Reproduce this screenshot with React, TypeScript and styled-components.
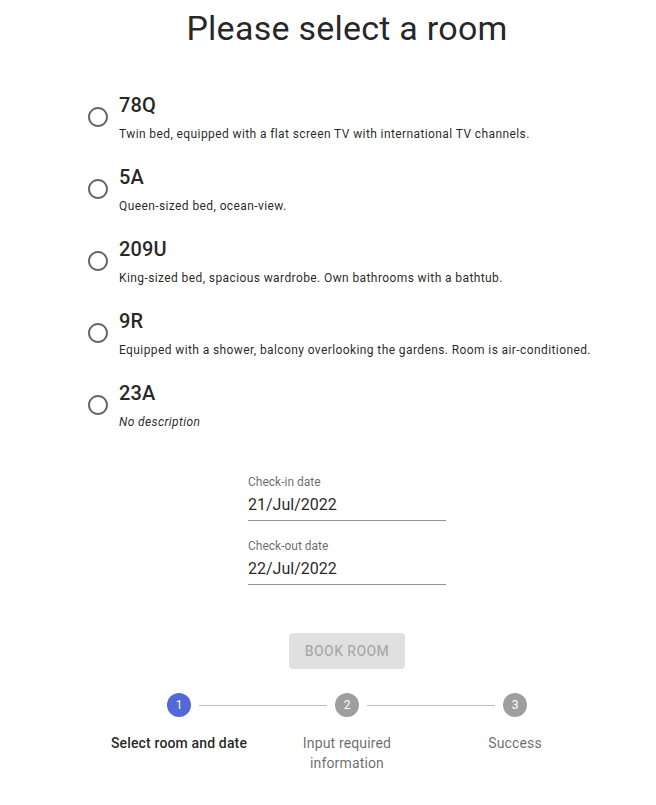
import * as React from "react";
import styled, { createGlobalStyle } from "styled-components";

const GlobalStyle = createGlobalStyle`
  body {
    margin: 0;
    font-family: Roboto, "Liberation Sans", sans-serif;
    color: rgba(0, 0, 0, 0.87);
    background: #fff;
  }
`;

const rooms = [
  { name: "78Q", description: "Twin bed, equipped with a flat screen TV with international TV channels." },
  { name: "5A", description: "Queen-sized bed, ocean-view." },
  { name: "209U", description: "King-sized bed, spacious wardrobe. Own bathrooms with a bathtub." },
  { name: "9R", description: "Equipped with a shower, balcony overlooking the gardens. Room is air-conditioned." },
  { name: "23A", description: "" },
];

const steps = ["Select room and date", "Input required information", "Success"];

export default function App() {
  return (
    <>
      <GlobalStyle />
      <Page>
        <Title>Please select a room</Title>
        <RoomList>
          {rooms.map((room) => (
            <RoomRow key={room.name}>
              <RadioBox>
                <svg width="24" height="24" viewBox="0 0 24 24" fill="rgba(0,0,0,0.6)">
                  <path d="M12 2C6.48 2 2 6.48 2 12s4.48 10 10 10 10-4.48 10-10S17.52 2 12 2zm0 18c-4.42 0-8-3.58-8-8s3.58-8 8-8 8 3.58 8 8-3.58 8-8 8z" />
                </svg>
              </RadioBox>
              <RoomText>
                <RoomName>{room.name}</RoomName>
                <RoomDesc empty={!room.description}>
                  {room.description || "No description"}
                </RoomDesc>
              </RoomText>
            </RoomRow>
          ))}
        </RoomList>

        <Fields>
          <Field>
            <FieldLabel>Check-in date</FieldLabel>
            <FieldValue>21/Jul/2022</FieldValue>
          </Field>
          <Field>
            <FieldLabel>Check-out date</FieldLabel>
            <FieldValue>22/Jul/2022</FieldValue>
          </Field>
        </Fields>

        <BookButton disabled>Book room</BookButton>

        <Stepper>
          {steps.map((label, i) => (
            <Step key={label}>
              {i > 0 && <Connector />}
              <StepIcon active={i === 0}>{i + 1}</StepIcon>
              <StepLabel active={i === 0}>{label}</StepLabel>
            </Step>
          ))}
        </Stepper>
      </Page>
    </>
  );
}

const Page = styled.div`
  box-sizing: border-box;
  width: 100%;
  padding-left: 38px;
  display: flex;
  flex-direction: column;
  align-items: center;
`;

const Title = styled.h1`
  margin: 7px 0 0;
  font-size: 34px;
  font-weight: 400;
  line-height: 42px;
  letter-spacing: 0.25px;
  color: rgba(0, 0, 0, 0.87);
`;

const RoomList = styled.div`
  align-self: stretch;
  box-sizing: border-box;
  padding-left: 39px;
  margin-top: 40px;
  display: flex;
  flex-direction: column;
  gap: 16px;
`;

const RoomRow = styled.label`
  display: flex;
  align-items: center;
  height: 56px;
`;

const RadioBox = styled.span`
  width: 42px;
  height: 42px;
  box-sizing: border-box;
  padding: 9px;
  display: flex;
  svg {
    display: block;
  }
`;

const RoomText = styled.div`
  display: flex;
  flex-direction: column;
`;

const RoomName = styled.div`
  font-size: 20px;
  font-weight: 500;
  line-height: 32px;
  letter-spacing: 0.15px;
`;

const RoomDesc = styled.div<{ empty: boolean }>`
  font-size: 12px;
  line-height: 24px;
  padding-top: 1px;
  letter-spacing: 0.4px;
  font-style: ${(p) => (p.empty ? "italic" : "normal")};
`;

const Fields = styled.div`
  margin-top: 40px;
  display: flex;
  flex-direction: column;
  gap: 16px;
`;

const Field = styled.div`
  width: 198px;
  height: 48px;
  box-sizing: border-box;
  border-bottom: 1px solid rgba(0, 0, 0, 0.42);
`;

const FieldLabel = styled.div`
  padding-top: 1px;
  font-size: 12px;
  line-height: 16px;
  color: rgba(0, 0, 0, 0.6);
`;

const FieldValue = styled.div`
  padding: 3px 0 4px;
  font-size: 16px;
  line-height: 23px;
  color: rgba(0, 0, 0, 0.87);
`;

const BookButton = styled.button`
  margin-top: 48px;
  width: 116px;
  height: 36px;
  border: none;
  border-radius: 4px;
  background: rgba(0, 0, 0, 0.12);
  color: rgba(0, 0, 0, 0.26);
  font-family: Roboto, "Liberation Sans", sans-serif;
  font-size: 14px;
  font-weight: 500;
  letter-spacing: 0.4px;
  text-transform: uppercase;
  white-space: nowrap;
  padding: 6px 0;
`;

const Stepper = styled.div`
  margin-top: 24px;
  width: 504px;
  display: flex;
`;

const Step = styled.div`
  position: relative;
  flex: 1;
  box-sizing: border-box;
  padding: 0 8px;
  display: flex;
  flex-direction: column;
  align-items: center;
`;

const Connector = styled.span`
  position: absolute;
  top: 12px;
  left: calc(-50% + 20px);
  right: calc(50% + 20px);
  border-top: 1px solid #bdbdbd;
`;

const StepIcon = styled.div<{ active: boolean }>`
  width: 24px;
  height: 24px;
  border-radius: 50%;
  background: ${(p) => (p.active ? "#5468d6" : "rgba(0, 0, 0, 0.38)")};
  color: #fff;
  font-size: 12px;
  line-height: 24px;
  text-align: center;
`;

const StepLabel = styled.div<{ active: boolean }>`
  margin-top: 16px;
  font-size: 14px;
  line-height: 20px;
  letter-spacing: 0.15px;
  text-align: center;
  font-weight: ${(p) => (p.active ? 500 : 400)};
  color: ${(p) => (p.active ? "rgba(0, 0, 0, 0.87)" : "rgba(0, 0, 0, 0.6)")};
`;
